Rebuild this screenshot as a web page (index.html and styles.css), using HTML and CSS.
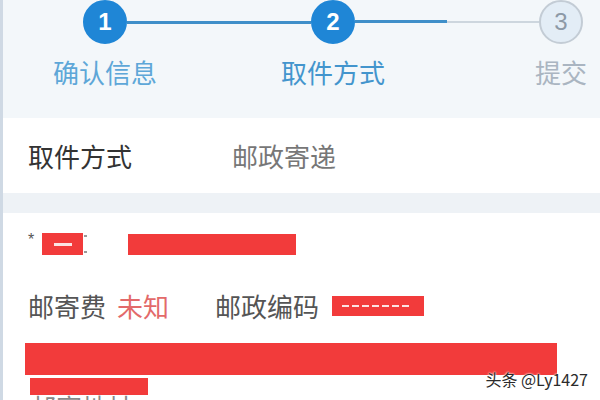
FILE: index.html
```html
<!DOCTYPE html>
<html lang="zh-CN">
<head>
  <meta charset="UTF-8" />
  <meta name="viewport" content="width=device-width, initial-scale=1.0"/>
  <title>取件方式</title>
  <link rel="stylesheet" href="styles.css">
</head>
<body>
  <div class="page">
    <div class="steps">
      <div class="track">
        <span class="dot active">1</span>
        <span class="bar active"></span>
        <span class="dot active">2</span>
        <span class="bar half"><i></i></span>
        <span class="dot">3</span>
      </div>
      <div class="labels">
        <span class="done">确认信息</span>
        <span class="current">取件方式</span>
        <span class="todo">提交</span>
      </div>
    </div>

    <div class="pick-row">
      <span class="key">取件方式</span>
      <span class="val">邮政寄递</span>
    </div>

    <div class="form">
      <div class="phone-row">
        <span class="star">*</span>
        <span class="mask m-name"></span>
        <span class="tick"></span>
        <span class="mask m-phone"></span>
      </div>

      <div class="fee-row">
        <span class="key">邮寄费</span>
        <span class="unknown">未知</span>
        <span class="key zip">邮政编码</span>
        <span class="mask m-zip"></span>
      </div>

      <div class="mask m-address"></div>
      <div class="mask m-line"></div>
      <div class="addr-label">邮寄地址</div>
    </div>
  </div>

  <div class="watermark">头条 @Ly1427</div>
</body>
</html>
```

FILE: styles.css
```css
body {
  margin: 0;
  padding: 0;
  width: 600px;
  height: 400px;
  overflow: hidden;
  background: #fff;
  font-family: "Noto Sans CJK SC", "Noto Sans", sans-serif;
}

.page {
  border-left: 3px solid #cfd9e4;
  height: 400px;
  overflow: hidden;
}

/* stepper */
.steps {
  background: #f3f7fa;
  height: 118px;
  overflow: hidden;
}

.track {
  display: flex;
  align-items: center;
  margin-left: 80px;
  height: 44px;
}

.dot {
  flex: none;
  width: 40px;
  height: 40px;
  border-radius: 50%;
  border: 2px solid #c3ccd5;
  background: #e3edf6;
  color: #8d99a6;
  font-family: "Liberation Sans", sans-serif;
  font-size: 24px;
  line-height: 40px;
  text-align: center;
}

.dot.active {
  border-color: #1f86d6;
  background: #1f86d6;
  color: #fff;
  font-weight: bold;
}

.bar {
  flex: none;
  width: 184px;
  height: 2px;
  background: #cdd6de;
}

.bar.active {
  height: 3px;
  background: #3f8fc9;
}

.bar.half i {
  display: block;
  width: 92px;
  height: 3px;
  margin-top: -1px;
  background: #3f8fc9;
}

.labels {
  display: flex;
  margin-left: -12px;
  margin-top: 12px;
}

.labels span {
  flex: none;
  width: 228px;
  text-align: center;
  font-size: 26px;
  line-height: 32px;
}

.labels .done {
  color: #5ea7d8;
}

.labels .current {
  color: #4395cd;
}

.labels .todo {
  color: #aab5c1;
}

/* pickup row */
.pick-row {
  display: flex;
  align-items: center;
  height: 75px;
  padding-left: 25px;
  background: #fff;
  border-bottom: 20px solid #eef2f6;
  font-size: 26px;
}

.pick-row .key {
  width: 204px;
  color: #333;
}

.pick-row .val {
  color: #777;
}

/* form */
.form {
  padding: 20px 0 0 25px;
}

.mask {
  display: block;
  background: #f23b3b;
}

.phone-row {
  display: flex;
  align-items: flex-start;
  height: 22px;
}

.star {
  font-family: "Liberation Sans", sans-serif;
  font-size: 16px;
  line-height: 14px;
  color: #555;
  width: 14px;
}

.m-name {
  width: 41px;
  height: 22px;
  background: linear-gradient(#fbe3e3, #fbe3e3) no-repeat 12px 10px / 18px 3px, #f23b3b;
}

.tick {
  width: 3px;
  height: 18px;
  margin: 2px 41px 0 1px;
  border-top: 2px solid #999;
  border-bottom: 2px solid #999;
  box-sizing: border-box;
}

.m-phone {
  width: 168px;
  height: 21px;
  margin-top: 1px;
}

.fee-row {
  display: flex;
  align-items: center;
  margin-top: 36px;
  font-size: 26px;
  line-height: 30px;
}

.fee-row .key {
  color: #555;
}

.unknown {
  color: #e36a6a;
  margin-left: 11px;
}

.zip {
  margin-left: 46px;
}

.m-zip {
  width: 92px;
  height: 20px;
  margin-left: 13px;
  background: repeating-linear-gradient(90deg, #fbe3e3 0 7px, transparent 7px 10px) no-repeat 10px 9px / 70px 2px, #f23b3b;
}

.m-address {
  width: 532px;
  height: 32px;
  margin: 22px 0 0 -3px;
}

.m-line {
  width: 118px;
  height: 17px;
  margin: 3px 0 0 2px;
}

.addr-label {
  font-size: 26px;
  line-height: 30px;
  color: #888;
  margin: -3px 0 0 2px;
}

.watermark {
  position: absolute;
  right: 12px;
  bottom: 9px;
  font-family: "Noto Sans CJK SC", sans-serif;
  font-size: 16px;
  color: #2b2b2b;
  text-shadow: 0 0 2px #fff, 0 0 2px #fff;
}
```
